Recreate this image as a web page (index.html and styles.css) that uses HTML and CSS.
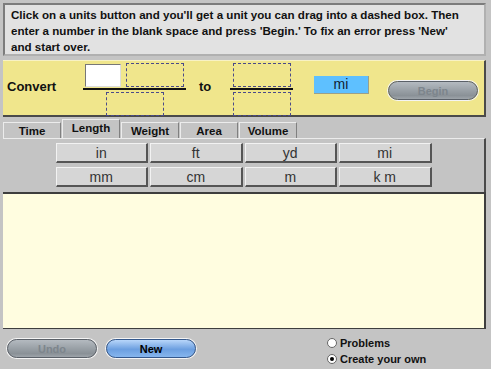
FILE: index.html
```html
<!DOCTYPE html>
<html lang="en">
<head>
  <meta charset="UTF-8">
  <title>Unit Conversion</title>
  <link rel="stylesheet" href="styles.css">
</head>
<body>
  <div class="applet">
    <div class="instructions">
      Click on a units button and you'll get a unit you can drag into a dashed box. Then<br>
      enter a number in the blank space and press 'Begin.' To fix an error press 'New'<br>
      and start over.
    </div>

    <div class="convert">
      <span class="word convert-word">Convert</span>
      <div class="fraction">
        <div class="frac-top">
          <input class="number" type="text">
          <div class="drop"></div>
        </div>
        <div class="bar"></div>
        <div class="drop"></div>
      </div>
      <span class="word to-word">to</span>
      <div class="fraction fraction-to">
        <div class="frac-top">
          <div class="drop"></div>
        </div>
        <div class="bar"></div>
        <div class="drop"></div>
      </div>
      <div class="target-unit">mi</div>
      <button class="pill pill-off begin" type="button">Begin</button>
    </div>

    <div class="tabs">
      <div class="tab">Time</div>
      <div class="tab selected">Length</div>
      <div class="tab">Weight</div>
      <div class="tab">Area</div>
      <div class="tab">Volume</div>
    </div>

    <div class="units">
      <div class="unit-grid">
        <button class="unit" type="button">in</button>
        <button class="unit" type="button">ft</button>
        <button class="unit" type="button">yd</button>
        <button class="unit" type="button">mi</button>
        <button class="unit" type="button">mm</button>
        <button class="unit" type="button">cm</button>
        <button class="unit" type="button">m</button>
        <button class="unit" type="button">k m</button>
      </div>
    </div>

    <div class="workspace"></div>

    <div class="footer">
      <button class="pill pill-off" type="button">Undo</button>
      <button class="pill pill-blue" type="button">New</button>
      <div class="modes">
        <label class="mode"><span class="radio"></span>Problems</label>
        <label class="mode"><span class="radio checked"></span>Create your own</label>
      </div>
    </div>
  </div>
</body>
</html>
```

FILE: styles.css
```css
html * {
  font-family: "Liberation Sans", Arial, Helvetica, sans-serif;
}

body {
  margin: 0;
  background: #c4c4c4;
}

.applet {
  width: 491px;
  height: 369px;
  padding: 3px 5px 0 3px;
  box-sizing: border-box;
  display: flex;
  flex-direction: column;
}

/* instructions */
.instructions {
  height: 53px;
  box-sizing: border-box;
  background: #e2e2e2;
  border: 2px solid #9a9a9a;
  border-color: #7c7c7c #b0b0b0 #b0b0b0 #7c7c7c;
  padding: 2px 6px;
  font-size: 11.6px;
  font-weight: bold;
  line-height: 16px;
  white-space: nowrap;
  color: #111;
}

/* convert row */
.convert {
  margin-top: 4px;
  height: 57px;
  box-sizing: border-box;
  display: flex;
  align-items: flex-start;
  background: #f0e68c;
  border-top: 1px solid #f8f2c4;
  border-right: 2px solid #4a4a4a;
  border-bottom: 2px solid #4a4a4a;
  padding-left: 4px;
}

.word {
  font-size: 13px;
  font-weight: bold;
  line-height: 15px;
  color: #111;
  margin-top: 18px;
}

.convert-word {
  width: 76px;
}

.to-word {
  margin-left: 13px;
  width: 31px;
}

.fraction {
  width: 103px;
  margin-top: 2px;
  display: flex;
  flex-direction: column;
  align-items: center;
}

.fraction-to {
  width: 63px;
}

.frac-top {
  display: flex;
  gap: 5px;
  align-self: stretch;
  justify-content: flex-end;
  padding-right: 2px;
}

.fraction-to .frac-top {
  justify-content: center;
  padding-right: 0;
}

.number {
  width: 36px;
  height: 23px;
  box-sizing: border-box;
  margin: 1px 0 0;
  padding: 0;
  background: #fff;
  border: 1px solid;
  border-color: #777 #ddd #ddd #777;
}

.drop {
  width: 58px;
  height: 24px;
  box-sizing: border-box;
  border: 1px dashed #4a4a8a;
}

.bar {
  align-self: stretch;
  height: 2px;
  margin: 1px 0 2px;
  background: #111;
}

.target-unit {
  margin: 15px 0 0 21px;
  width: 55px;
  height: 18px;
  box-sizing: border-box;
  background: #5ec0ff;
  border-bottom: 1px solid #9aa08a;
  border-right: 1px solid #9aa08a;
  text-align: center;
  font-size: 14px;
  line-height: 17px;
  color: #123;
}

/* pill buttons */
.pill {
  width: 90px;
  height: 19px;
  padding: 0;
  border-radius: 10px;
  border: 1px solid #5a6068;
  box-shadow: 0 0 0 1px #f4f4f4;
  font-size: 11px;
  font-weight: bold;
}

.pill-off {
  background: linear-gradient(#b4bac0, #99a0a6 50%, #8a9197 80%, #9ea4aa);
  color: #7d858c;
}

.pill-blue {
  background: linear-gradient(#b8d6fa, #6c9fe0 55%, #86b6ee);
  border-color: #34588c;
  color: #000;
}

.begin {
  margin: 20px 0 0 19px;
}

/* tabs */
.tabs {
  margin-top: 2px;
  height: 20px;
  display: flex;
  align-items: flex-end;
  gap: 1px;
}

.tab {
  width: 58px;
  height: 17px;
  box-sizing: border-box;
  background: #c4c4c4;
  border: 1px solid #808080;
  border-color: #ececec #808080 #ececec #ececec;
  text-align: center;
  font-size: 11.5px;
  font-weight: bold;
  line-height: 16px;
  color: #111;
}

.tab.selected {
  height: 20px;
  border-bottom-color: #c4c4c4;
  line-height: 17px;
}

/* unit buttons */
.units {
  height: 54px;
  box-sizing: border-box;
  border-top: 1px solid #ececec;
  border-right: 2px solid #4a4a4a;
  padding-top: 4px;
  margin-top: -1px;
  background: #c4c4c4;
}

.unit-grid {
  width: 376px;
  margin: 0 auto;
  display: grid;
  grid-template-columns: repeat(4, 1fr);
  gap: 4px 2px;
}

.unit {
  height: 20px;
  padding: 0;
  background: #d6d6d6;
  border: 1px solid;
  border-color: #f2f2f2 #555 #555 #f2f2f2;
  border-width: 1px 2px 2px 1px;
  font-size: 14px;
  line-height: 16px;
  color: #333;
}

/* workspace */
.workspace {
  height: 137px;
  box-sizing: border-box;
  background: #fffde0;
  border-top: 2px solid #3e3e3e;
  border-right: 2px solid #3e3e3e;
  border-bottom: 1px solid #3e3e3e;
}

/* footer */
.footer {
  display: flex;
  align-items: flex-start;
  padding: 10px 0 0 4px;
}

.footer .pill + .pill {
  margin-left: 9px;
}

.modes {
  margin-left: 131px;
  margin-top: -4px;
  display: flex;
  flex-direction: column;
}

.mode {
  display: flex;
  align-items: center;
  height: 16px;
  font-size: 11px;
  font-weight: bold;
  color: #111;
}

.radio {
  width: 8px;
  height: 8px;
  margin-right: 3px;
  border-radius: 50%;
  background: #fff;
  border: 1px solid #666;
  position: relative;
}

.radio.checked::after {
  content: "";
  position: absolute;
  left: 2px;
  top: 2px;
  width: 4px;
  height: 4px;
  border-radius: 50%;
  background: #000;
}
```
